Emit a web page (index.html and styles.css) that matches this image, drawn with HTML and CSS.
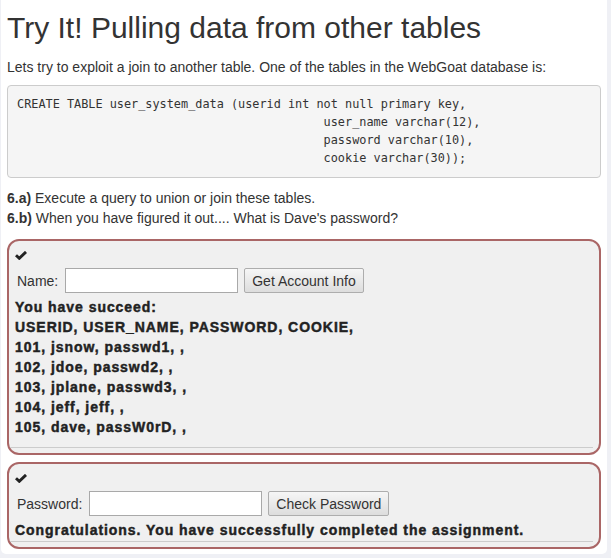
FILE: index.html
```html
<!DOCTYPE html>
<html>
<head>
<meta charset="utf-8">
<link rel="stylesheet" href="styles.css">
</head>
<body>
<div class="page">
  <h1 class="title">Try It! Pulling data from other tables</h1>
  <p class="lead">Lets try to exploit a join to another table. One of the tables in the WebGoat database is:</p>
  <pre class="code">CREATE TABLE user_system_data (userid int not null primary key,
                                           user_name varchar(12),
                                           password varchar(10),
                                           cookie varchar(30));</pre>
  <p class="steps"><b>6.a)</b> Execute a query to union or join these tables.<br><b>6.b)</b> When you have figured it out.... What is Dave's password?</p>

  <div class="attack">
    <div class="check"><svg width="12" height="9" viewBox="0 0 12 9"><path d="M1 4.2 L4.3 7.3 L11 0.9" fill="none" stroke="#222" stroke-width="2.9"/></svg></div>
    <form class="row">
      <label class="lbl">Name:</label>
      <input class="field" type="text">
      <button class="btn" type="button">Get Account Info</button>
    </form>
    <div class="feedback extra">You have succeed:<br>USERID, USER_NAME, PASSWORD, COOKIE,<br>101, jsnow, passwd1, ,<br>102, jdoe, passwd2, ,<br>103, jplane, passwd3, ,<br>104, jeff, jeff, ,<br>105, dave, passW0rD, ,</div>
    <div class="rule"></div>
  </div>

  <div class="attack last">
    <div class="check"><svg width="12" height="9" viewBox="0 0 12 9"><path d="M1 4.2 L4.3 7.3 L11 0.9" fill="none" stroke="#222" stroke-width="2.9"/></svg></div>
    <form class="row">
      <label class="lbl">Password:</label>
      <input class="field" type="text">
      <button class="btn" type="button">Check Password</button>
    </form>
    <div class="feedback">Congratulations. You have successfully completed the assignment.</div>
    <div class="rule"></div>
  </div>
</div>
</body>
</html>
```
FILE: styles.css
```css
html, body {
  margin: 0;
  padding: 0;
  background: #eff0f5;
}
body {
  font-family: "Liberation Sans", Arial, sans-serif;
  color: #333;
  font-size: 14px;
  line-height: 20px;
}
.page {
  margin-left: 1px;
  width: 594px;
  padding: 0 6px 5px 6px;
  background: #fff;
  border-radius: 0 0 5px 5px;
  overflow: hidden;
}
.title {
  font-size: 30px;
  font-weight: 500;
  line-height: 33px;
  margin: 11px 0 13px 0;
  color: #333;
}
.lead {
  margin: 0 0 8px 0;
}
.code {
  font-family: "DejaVu Sans Mono", monospace;
  font-size: 11.85px;
  line-height: 18px;
  color: #333;
  background: #f5f5f5;
  border: 1px solid #ccc;
  border-radius: 4px;
  padding: 9px 9px 10px 9px;
  margin: 0 0 10px 0;
}
.steps {
  margin: 0 0 11px 0;
}
.attack {
  border: 2px solid #a66;
  border-radius: 12px;
  background: #f0f0f0;
  padding: 3px 0 5px 0;
  margin: 0 0 7px 0;
}
.attack.last {
  margin-bottom: 0;
}
.check {
  height: 22px;
  padding-left: 6px;
  display: flex;
  align-items: center;
}
.row {
  display: flex;
  align-items: center;
  gap: 6px;
  margin: 2px 0 4px 8px;
}
.lbl {
  font-weight: normal;
  margin-right: 1px;
}
.field {
  width: 169px;
  height: 21px;
  border: 1px solid #a9a9a9;
  padding: 1px;
  background: #fff;
  margin: 0;
}
.btn {
  font-family: "Liberation Sans", Arial, sans-serif;
  font-size: 14px;
  color: #333;
  height: 25px;
  padding: 0 7px;
  border: 1px solid #adadad;
  border-radius: 2px;
  background: linear-gradient(#f6f6f6, #dddddd);
  margin: 0;
}
.feedback {
  font-weight: bold;
  font-size: 14px;
  letter-spacing: 0.95px;
  -webkit-text-stroke: 0.45px #222;
  line-height: 20px;
  color: #222;
  padding-left: 6px;
}
.feedback.extra {
  padding-bottom: 9px;
}
.rule {
  border-top: 1px solid #ccc;
  margin: 1px 6px 0 1px;
}
```
